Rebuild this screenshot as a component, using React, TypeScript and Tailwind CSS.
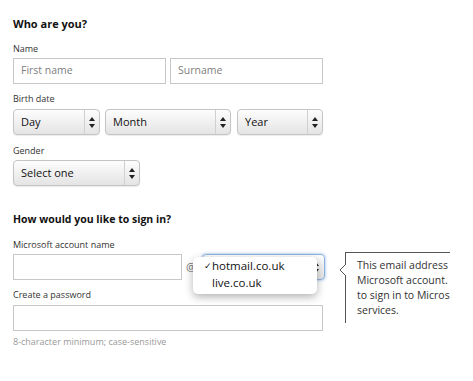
import type { ReactNode } from "react";

const font = { fontFamily: '"Open Sans", "Noto Sans", sans-serif' };

function Arrows() {
  return (
    <svg width="6" height="11" viewBox="0 0 6 11" className="text-[#222]">
      <path d="M3 0 L6 4 L0 4 Z" fill="currentColor" />
      <path d="M3 11 L6 7 L0 7 Z" fill="currentColor" />
    </svg>
  );
}

function Select({ label, width }: { label: string; width: string }) {
  return (
    <div
      className={`${width} flex h-[26px] items-stretch rounded-[4px] border border-[#c4c4c4] bg-gradient-to-b from-[#fdfdfd] to-[#e4e4e4] shadow-[0_1px_1px_rgba(0,0,0,0.08)]`}
    >
      <div className="flex flex-1 items-center pl-[7px] text-[11px] text-[#111]">{label}</div>
      <div className="flex w-[15px] items-center justify-center border-l border-[#d0d0d0]">
        <Arrows />
      </div>
    </div>
  );
}

function Input({ placeholder, width }: { placeholder?: string; width: string }) {
  return (
    <div
      className={`${width} flex h-[26px] items-center border border-[#c8c8c8] bg-white pl-[7px] text-[10.5px] text-[#808080]`}
    >
      {placeholder}
    </div>
  );
}

function Label({ children, className = "" }: { children: ReactNode; className?: string }) {
  return <div className={`h-[12px] text-[9px] leading-[12px] text-[#333] ${className}`}>{children}</div>;
}

export default function App() {
  return (
    <div className="h-[381px] w-[473px] overflow-hidden bg-white pl-[13px] pt-[16px]" style={font}>
      <h2 className="h-[16px] text-[11px] font-bold leading-[16px] text-[#111]">Who are you?</h2>

      <Label className="mt-[11px]">Name</Label>
      <div className="mt-[3px] flex gap-[4px]">
        <Input placeholder="First name" width="w-[153px]" />
        <Input placeholder="Surname" width="w-[153px]" />
      </div>

      <Label className="mt-[9px]">Birth date</Label>
      <div className="mt-[4px] flex">
        <Select label="Day" width="w-[87px]" />
        <Select label="Month" width="ml-[5px] w-[126px]" />
        <Select label="Year" width="ml-[6px] w-[86px]" />
      </div>

      <Label className="mt-[10px]">Gender</Label>
      <div className="mt-[3px] flex">
        <Select label="Select one" width="w-[127px]" />
      </div>

      <h2 className="mt-[25px] h-[16px] text-[10.5px] font-bold leading-[16px] text-[#111]">
        How would you like to sign in?
      </h2>

      <Label className="mt-[12px]">Microsoft account name</Label>
      <div className="relative mt-[3px] flex items-center">
        <Input width="w-[169px]" />
        <span className="ml-[4px] text-[11px] text-[#777]">@</span>
        <div className="ml-[6px] flex h-[26px] w-[123px] items-stretch rounded-[4px] border border-[#8fb3de] bg-gradient-to-b from-[#fdfdfd] to-[#e4e4e4] shadow-[0_0_3px_rgba(80,140,220,0.7)]">
          <div className="flex-1" />
          <div className="flex w-[15px] items-center justify-center">
            <Arrows />
          </div>
        </div>

        {/* dropdown menu */}
        <div className="absolute left-[180px] top-[3px] z-10 w-[124px] rounded-[5px] bg-white pb-[3px] pl-[11px] text-[11.5px] leading-[17px] text-[#111] shadow-[0_3px_9px_rgba(0,0,0,0.3)]">
          <div className="flex items-center">
            <span className="w-[7px] text-[9px] leading-[17px]">✓</span>
            <span className="pl-[1px]">hotmail.co.uk</span>
          </div>
          <div className="flex">
            <span className="w-[7px]" />
            <span className="pl-[1px]">live.co.uk</span>
          </div>
        </div>

        {/* callout */}
        <div className="absolute left-[332px] top-[-2px] h-[71px] w-[105px] overflow-hidden border-l border-t border-[#555] bg-white">
          <div className="whitespace-nowrap pl-[11px] pt-[5px] text-[10.5px] leading-[15px] text-[#333]">
            This email address is your new
            <br />
            Microsoft account. You'll use it
            <br />
            to sign in to Microsoft
            <br />
            services.
          </div>
        </div>
        <svg className="absolute left-[326px] top-[10px]" width="8" height="12" viewBox="0 0 8 12">
          <path d="M7 0 L1 6 L7 12" fill="white" stroke="#555" strokeWidth="1" />
          <rect x="6.5" y="1" width="2" height="10" fill="white" />
        </svg>
      </div>

      <Label className="mt-[9px]">Create a password</Label>
      <div className="mt-[4px]">
        <Input width="w-[310px]" />
      </div>
      <div className="mt-[5px] h-[12px] text-[9px] leading-[12px] text-[#999]">
        8-character minimum; case-sensitive
      </div>
    </div>
  );
}
